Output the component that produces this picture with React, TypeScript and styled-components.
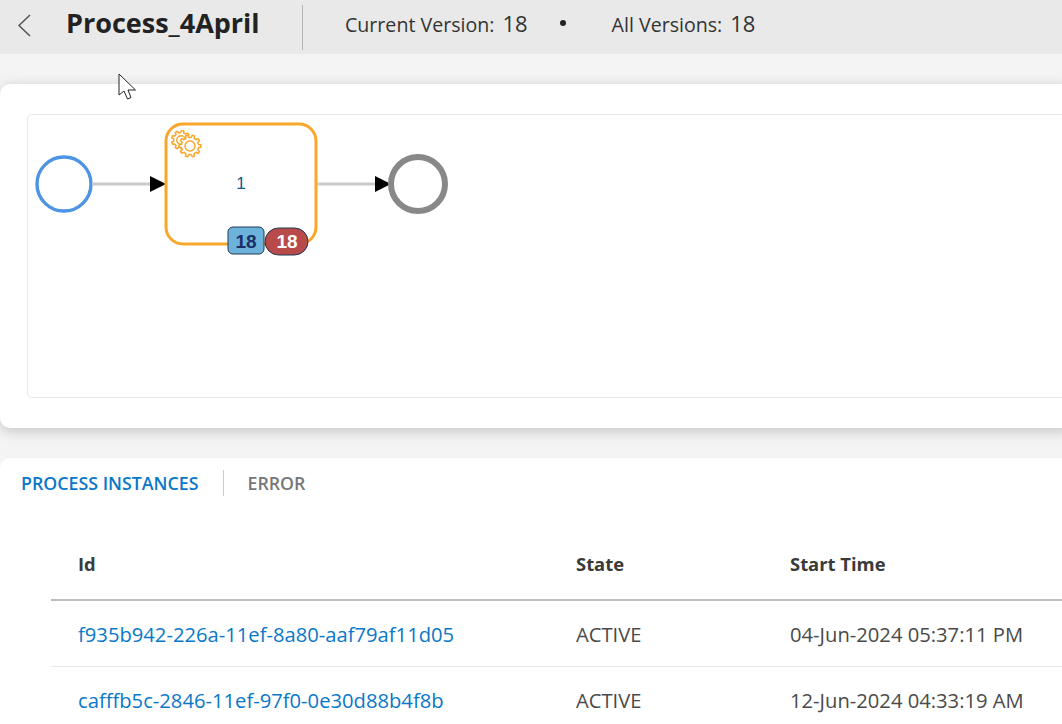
import React from "react";
import styled, { createGlobalStyle } from "styled-components";

const GlobalStyle = createGlobalStyle`
  html, body {
    margin: 0;
    padding: 0;
    height: 100%;
    background: #f4f4f4;
    overflow: hidden;
  }
  #root {
    height: 100%;
  }
`;

const rows = [
  { id: "f935b942-226a-11ef-8a80-aaf79af11d05", state: "ACTIVE", start: "04-Jun-2024 05:37:11 PM" },
  { id: "cafffb5c-2846-11ef-97f0-0e30d88b4f8b", state: "ACTIVE", start: "12-Jun-2024 04:33:19 AM" },
];

// outline of a cog wheel, used for the service task marker
function gearPath(cx: number, cy: number, outer: number, inner: number, teeth: number) {
  const step = (Math.PI * 2) / teeth;
  const pts: string[] = [];
  for (let i = 0; i < teeth; i++) {
    const a = i * step;
    const offsets: [number, number][] = [
      [-0.3, inner],
      [-0.17, outer],
      [0.17, outer],
      [0.3, inner],
    ];
    offsets.forEach(([o, r]) => {
      const t = a + o * step;
      pts.push(`${(cx + Math.cos(t) * r).toFixed(2)} ${(cy + Math.sin(t) * r).toFixed(2)}`);
    });
  }
  return `M${pts.join("L")}Z`;
}

function Diagram() {
  return (
    <DiagramSvg viewBox="28 115 1035 282">
      <circle cx="64" cy="184" r="27" fill="#fff" stroke="#4e94e4" strokeWidth="3.4" />
      <line x1="92" y1="184" x2="152" y2="184" stroke="#c9c9c9" strokeWidth="3" />
      <polygon points="150,176 166,184 150,192" fill="#000" />

      <rect x="166" y="124" width="150" height="120" rx="17" fill="#fff" stroke="#f9a72b" strokeWidth="3" />
      <g fill="#fff" stroke="#f9a72b" strokeWidth="1.5" strokeLinejoin="round">
        <path d={gearPath(181, 140, 9.5, 7.4, 9)} />
        <circle cx="181" cy="140" r="4.2" />
        <path d={gearPath(190, 146, 11, 8.6, 10)} />
        <circle cx="190" cy="146" r="5" />
      </g>
      <TaskLabel x="241" y="189" textAnchor="middle">1</TaskLabel>

      <rect x="228" y="227" width="36" height="27" rx="5" fill="#6cb2da" stroke="#1e3a55" strokeWidth="1" />
      <BadgeText x="246" y="248" textAnchor="middle" fill="#1b2f66">18</BadgeText>
      <rect x="265" y="228" width="43" height="27" rx="13.5" fill="#b94a4a" stroke="#1e3a55" strokeWidth="1" />
      <BadgeText x="287" y="248" textAnchor="middle" fill="#fff">18</BadgeText>

      <line x1="317" y1="184" x2="377" y2="184" stroke="#c9c9c9" strokeWidth="3" />
      <polygon points="375,176 391,184 375,192" fill="#000" />
      <circle cx="418" cy="184" r="27" fill="#fff" stroke="#888" strokeWidth="6" />
    </DiagramSvg>
  );
}

export default function App() {
  return (
    <Page>
      <GlobalStyle />
      <Header>
        <BackButton aria-label="Back">
          <svg width="16" height="24" viewBox="0 0 16 24">
            <path d="M14 2 L3 12.5 L14 23" fill="none" stroke="#555" strokeWidth="1.5" />
          </svg>
        </BackButton>
        <Title>Process_4April</Title>
        <HeaderDivider />
        <Meta>
          Current Version:<MetaValue>18</MetaValue>
        </Meta>
        <Dot />
        <Meta>
          All Versions:<MetaValue>18</MetaValue>
        </Meta>
      </Header>

      <Cursor width="20" height="28" viewBox="0 0 20 28">
        <path
          d="M1 1 L1 22 L6 18 L9.5 26 L13 24.5 L10 17 L17.5 17 Z"
          fill="#fff"
          stroke="#222"
          strokeWidth="1"
          strokeLinejoin="round"
        />
      </Cursor>

      <DiagramCard>
        <Canvas>
          <Diagram />
        </Canvas>
      </DiagramCard>

      <InstancesCard>
        <Tabs>
          <Tab $active>PROCESS INSTANCES</Tab>
          <TabDivider />
          <Tab>ERROR</Tab>
        </Tabs>
        <Table>
          <HeadRow>
            <HeadCell>Id</HeadCell>
            <HeadCell>State</HeadCell>
            <HeadCell>Start Time</HeadCell>
          </HeadRow>
          {rows.map((row) => (
            <BodyRow key={row.id}>
              <LinkCell>{row.id}</LinkCell>
              <Cell>{row.state}</Cell>
              <Cell>{row.start}</Cell>
            </BodyRow>
          ))}
        </Table>
      </InstancesCard>
    </Page>
  );
}

const Page = styled.div`
  position: relative;
  height: 724px;
  overflow: hidden;
  font-family: "Open Sans", "Noto Sans", sans-serif;
  color: #333;
`;

const Header = styled.header`
  display: flex;
  align-items: center;
  height: 54px;
  padding-bottom: 8px;
  box-sizing: border-box;
  background: #e9e9e9;
`;

const BackButton = styled.div`
  display: flex;
  width: 33px;
  margin-left: 16px;
  margin-top: 3px;
`;

const Title = styled.h1`
  width: 236px;
  margin: -2px 0 0 17px;
  font-size: 27px;
  font-weight: 700;
  color: #222;
  white-space: nowrap;
`;

const HeaderDivider = styled.div`
  width: 1px;
  height: 45px;
  margin-top: 8px;
  background: #b5b5b5;
`;

const Meta = styled.div`
  display: flex;
  align-items: baseline;
  margin-left: 42px;
  font-size: 19.6px;
  color: #333;
`;

const MetaValue = styled.span`
  margin-left: 8px;
  font-size: 22px;
`;

const Dot = styled.span`
  width: 6px;
  height: 6px;
  margin-left: 32px;
  margin-right: 4px;
  border-radius: 50%;
  background: #222;
`;

const Cursor = styled.svg`
  position: absolute;
  left: 118px;
  top: 73px;
  z-index: 2;
`;

const DiagramCard = styled.section`
  margin: 30px -12px 0 0;
  padding: 30px 0 30px 27px;
  background: #fff;
  border-radius: 10px;
  box-shadow: 0 3px 14px rgba(0, 0, 0, 0.2);
`;

const Canvas = styled.div`
  height: 284px;
  border: 1px solid #e8e8e8;
  border-radius: 4px;
  box-sizing: border-box;
  background: #fff;
`;

const DiagramSvg = styled.svg`
  display: block;
  width: 1035px;
  height: 282px;
`;

const TaskLabel = styled.text`
  font-family: "Liberation Sans", sans-serif;
  font-size: 17px;
  fill: #0a5c8a;
`;

const BadgeText = styled.text`
  font-family: "Liberation Sans", sans-serif;
  font-size: 19px;
  font-weight: 700;
`;

const InstancesCard = styled.section`
  margin: 30px -12px 0 0;
  height: 300px;
  background: #fff;
  border-radius: 10px;
`;

const Tabs = styled.div`
  display: flex;
  align-items: center;
  height: 50px;
  padding-left: 21px;
`;

const Tab = styled.span<{ $active?: boolean }>`
  font-size: 17.8px;
  font-weight: 600;
  color: ${(p) => (p.$active ? "#0a78c8" : "#777")};
`;

const TabDivider = styled.span`
  width: 1px;
  height: 26px;
  margin: 0 23px 0 25px;
  background: #ccc;
`;

const Table = styled.div`
  margin: 40px 0 0 51px;
`;

const HeadRow = styled.div`
  display: grid;
  grid-template-columns: 498px 214px 1fr;
  align-items: center;
  height: 53px;
  box-sizing: border-box;
  padding: 0 0 20px 27px;
  border-bottom: 2px solid #bdbdbd;
`;

const HeadCell = styled.div`
  font-size: 18.4px;
  font-weight: 700;
  color: #3a3a3a;
`;

const BodyRow = styled.div`
  display: grid;
  grid-template-columns: 498px 214px 1fr;
  align-items: center;
  height: 66px;
  box-sizing: border-box;
  padding-left: 27px;
  border-bottom: 1px solid #e8e8e8;
`;

const Cell = styled.div`
  font-size: 20.2px;
  color: #4a4a4a;
`;

const LinkCell = styled(Cell)`
  color: #0a78c8;
`;
